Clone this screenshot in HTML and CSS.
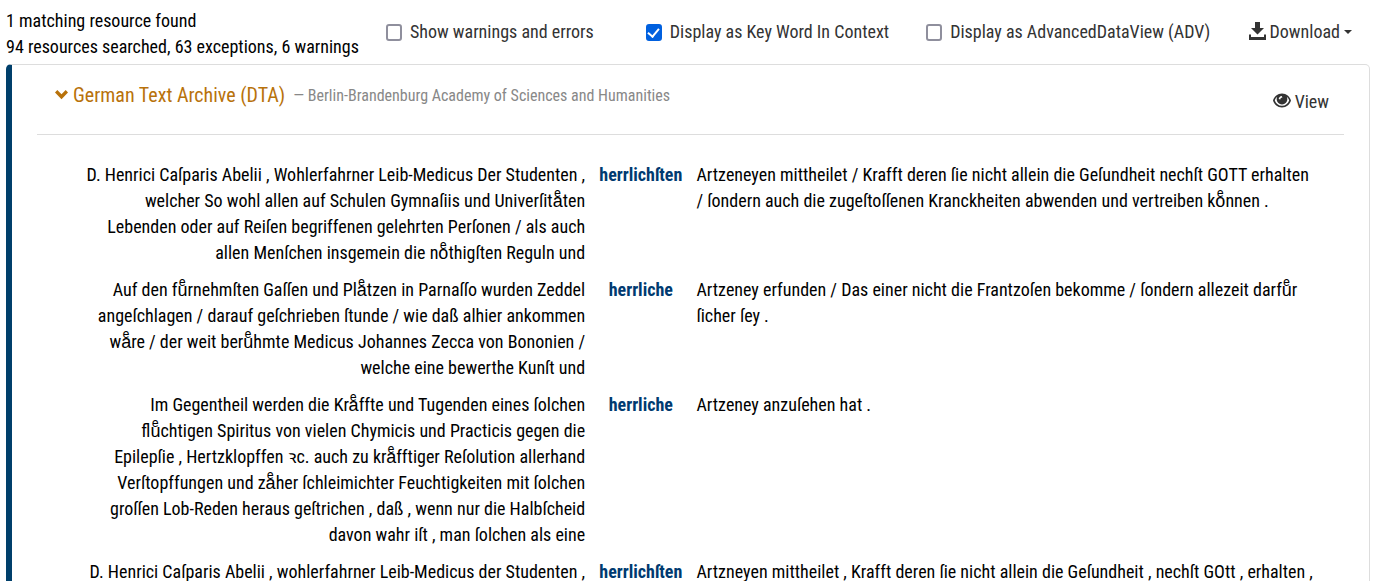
FILE: index.html
```html
<!DOCTYPE html>
<html lang="de">
<head>
<meta charset="utf-8">
<title>Search results</title>
<link rel="stylesheet" href="styles.css">
</head>
<body>
<header class="toolbar" lang="en">
  <div class="summary">
    <div>1 matching resource found</div>
    <div>94 resources searched, 63 exceptions, 6 warnings</div>
  </div>
  <div class="options">
    <label class="option" for="warnings"><input type="checkbox" id="warnings">Show warnings and errors</label>
    <label class="option" for="kwic"><input type="checkbox" id="kwic" checked>Display as Key Word In Context</label>
    <label class="option" for="adv"><input type="checkbox" id="adv">Display as AdvancedDataView (ADV)</label>
  </div>
  <button class="action download" type="button">
    <svg width="17" height="18" viewBox="0 0 17 18" aria-hidden="true"><path d="M6 0h5v6h4l-6.500 6.500L2 6h4zM0 12.500h2v2.500h13v-2.500h2V18H0z"/></svg>
    Download
    <span class="caret"></span>
  </button>
</header>
<main class="card">
  <div class="card-head" lang="en">
    <h1 class="title">
      <svg width="13" height="10" viewBox="0 0 13 10" aria-hidden="true"><path d="M2.300 0 6.500 4.200 10.700 0 13 2.400 6.500 9.200 0 2.400z"/></svg>
      <a class="resource" href="#dta">German Text Archive (DTA)</a>
      <small class="institution">— Berlin-Brandenburg Academy of Sciences and Humanities</small>
    </h1>
    <button class="action view" type="button">
      <svg width="18" height="16" viewBox="0 0 18 16" aria-hidden="true"><path fill-rule="evenodd" d="M9 .5C4.500.5 1.300 3.500 0 7.500c1.300 4 4.500 7 9 7s7.700-3 9-7c-1.300-4-4.500-7-9-7zM1.800 7.500c.6-1.700 1.300-2.800 2.400-3.700A5.300 5.300 0 0 0 9 11.400a5.300 5.300 0 0 0 4.800-7.600c1.100.9 1.800 2 2.400 3.700-1.300 3.200-3.700 5.300-7.200 5.300S3.100 10.700 1.800 7.500zM8.800 2.900l.6 1.500c-1.300.1-2 .8-2.100 2l-1.600-.4c.2-1.700 1.400-2.900 3.100-3.100z"/></svg>
      View
    </button>
  </div>
  <table class="kwic">
    <tbody>
      <tr>
        <td class="left">D. Henrici Caſparis Abelii , Wohlerfahrner Leib-Medicus Der Studenten ,<br>welcher So wohl allen auf Schulen Gymnaſiis und Univerſitaͤten<br>Lebenden oder auf Reiſen begriffenen gelehrten Perſonen / als auch<br>allen Menſchen insgemein die noͤthigſten Reguln und</td>
        <th class="hit" scope="row">herrlichſten</th>
        <td class="right">Artzeneyen mittheilet / Krafft deren ſie nicht allein die Geſundheit nechſt GOTT erhalten<br>/ ſondern auch die zugeſtoſſenen Kranckheiten abwenden und vertreiben koͤnnen .</td>
      </tr>
      <tr>
        <td class="left">Auf den fuͤrnehmſten Gaſſen und Plaͤtzen in Parnaſſo wurden Zeddel<br>angeſchlagen / darauf geſchrieben ſtunde / wie daß alhier ankommen<br>waͤre / der weit beruͤhmte Medicus Johannes Zecca von Bononien /<br>welche eine bewerthe Kunſt und</td>
        <th class="hit" scope="row">herrliche</th>
        <td class="right">Artzeney erfunden / Das einer nicht die Frantzoſen bekomme / ſondern allezeit darfuͤr<br>ſicher ſey .</td>
      </tr>
      <tr>
        <td class="left">Im Gegentheil werden die Kraͤffte und Tugenden eines ſolchen<br>fluͤchtigen Spiritus von vielen Chymicis und Practicis gegen die<br>Epilepſie , Hertzklopffen ꝛc. auch zu kraͤfftiger Reſolution allerhand<br>Verſtopffungen und zaͤher ſchleimichter Feuchtigkeiten mit ſolchen<br>groſſen Lob-Reden heraus geſtrichen , daß , wenn nur die Halbſcheid<br>davon wahr iſt , man ſolchen als eine</td>
        <th class="hit" scope="row">herrliche</th>
        <td class="right">Artzeney anzuſehen hat .</td>
      </tr>
      <tr>
        <td class="left">D. Henrici Caſparis Abelii , wohlerfahrner Leib-Medicus der Studenten ,</td>
        <th class="hit" scope="row">herrlichſten</th>
        <td class="right">Artzneyen mittheilet , Krafft deren ſie nicht allein die Geſundheit , nechſt GOtt , erhalten ,</td>
      </tr>
    </tbody>
  </table>
</main>
</body>
</html>
```
FILE: styles.css
```css
* { box-sizing: border-box; }
body {
  margin: 0;
  padding: 8px 8px 0 6px;
  font: 18px/26px "Roboto Condensed", Roboto, sans-serif;
  color: #000;
  background: #fff;
}
.toolbar {
  display: flex;
  align-items: center;
  padding-right: 18px;
  margin-bottom: 4px;
  white-space: nowrap;
}
.summary { margin-right: 27px; }
.options {
  display: flex;
  flex: 1;
  gap: 52px;
  padding-bottom: 4px;
  color: #333;
}
.options .option:last-child { margin-left: -15px; }
.option {
  display: flex;
  align-items: center;
  gap: 8px;
}
.option input {
  appearance: none;
  display: grid;
  place-content: center;
  width: 16px;
  height: 17px;
  margin: 0;
  border: 2px solid #8f8f9d;
  border-radius: 3px;
  background: #fff;
}
.option input:checked {
  border-color: #0060df;
  background: #0060df;
}
.option input:checked::before {
  content: "";
  width: 5px;
  height: 9px;
  margin-bottom: 2px;
  border: solid #fff;
  border-width: 0 2px 2px 0;
  transform: rotate(40deg);
}
.action {
  display: flex;
  align-items: center;
  gap: 4px;
  padding: 0;
  border: 0;
  background: none;
  font: inherit;
  color: #333;
}
.download { padding-bottom: 5px; }
.download svg { margin-bottom: 2px; }
.view { padding-top: 4px; }
.view svg { margin-bottom: 2px; }
svg { fill: currentColor; flex: none; }
.caret {
  border: 4px solid transparent;
  border-top-color: currentColor;
  border-bottom: 0;
}
.card {
  padding: 0 25px;
  border: 1px solid #ddd;
  border-left: 6px solid #003f6b;
  border-radius: 5px;
}
.card-head {
  display: flex;
  justify-content: space-between;
  align-items: center;
  height: 70px;
  padding: 0 15px 0 18px;
  border-bottom: 1px solid #ddd;
}
.title {
  display: flex;
  align-items: center;
  gap: 5px;
  margin: 0 0 10px;
  font-size: 20px;
  font-weight: 400;
  color: #b8720b;
}
.resource { color: inherit; text-decoration: none; }
.institution { padding: 2px 0 0 3px; font-size: 16px; color: #888; }
.kwic {
  width: 95%;
  margin: 22px auto 0;
  border-collapse: collapse;
  table-layout: fixed;
}
.kwic td, .kwic th { padding: 5px 6px 6px; vertical-align: top; white-space: nowrap; }
.kwic .left { width: 42%; text-align: right; }
.kwic .hit { width: 8%; color: #003a70; }
.kwic .right { width: 50%; }
```
